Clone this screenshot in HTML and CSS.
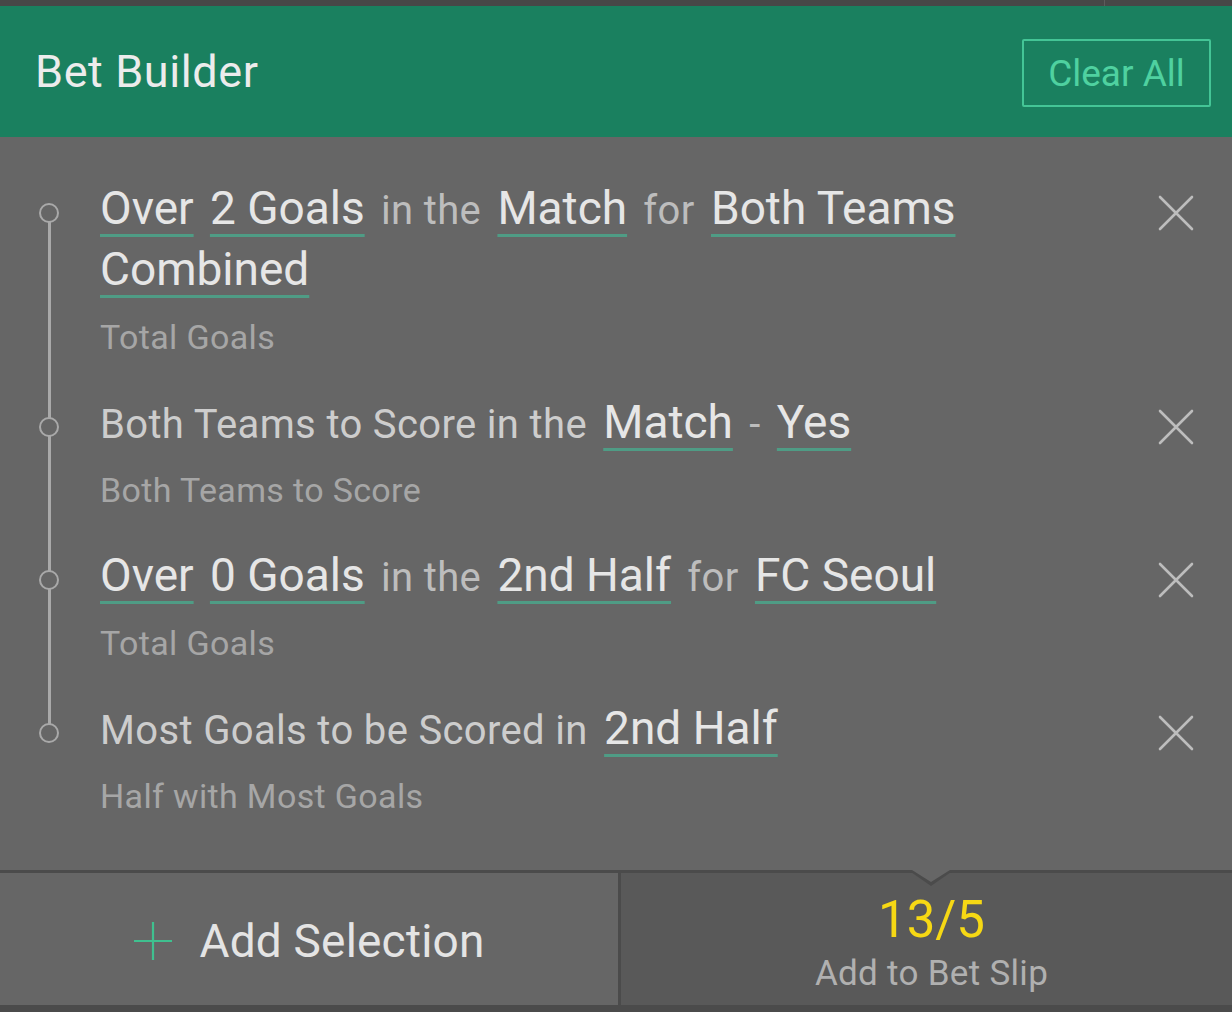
FILE: index.html
```html
<!DOCTYPE html>
<html lang="en">
<head>
    <meta charset="UTF-8">
    <meta name="viewport" content="width=device-width, initial-scale=1.0">
    <title>Bet Builder</title>
    <link rel="stylesheet" href="styles.css">
</head>
<body>
    <div class="topstrip"><span class="tick"></span></div>

    <header class="header">
        <h1>Bet Builder</h1>
        <button class="clear">Clear All</button>
    </header>

    <main class="list">
        <div class="item">
            <span class="dot"></span>
            <div class="body">
                <div class="line"><span class="hl">Over</span> <span class="hl">2 Goals</span> <span class="mid">in the</span> <span class="hl">Match</span> <span class="mid">for</span> <span class="hl">Both Teams</span> <span class="hl">Combined</span></div>
                <div class="sub">Total Goals</div>
            </div>
            <button class="remove"><svg viewBox="0 0 36 36" width="36" height="36"><path d="M2 2 L34 34 M34 2 L2 34"/></svg></button>
        </div>

        <div class="item">
            <span class="dot"></span>
            <div class="body">
                <div class="line"><span class="txt">Both Teams to Score in the</span> <span class="hl">Match</span> <span class="mid">-</span> <span class="hl">Yes</span></div>
                <div class="sub">Both Teams to Score</div>
            </div>
            <button class="remove"><svg viewBox="0 0 36 36" width="36" height="36"><path d="M2 2 L34 34 M34 2 L2 34"/></svg></button>
        </div>

        <div class="item">
            <span class="dot"></span>
            <div class="body">
                <div class="line"><span class="hl">Over</span> <span class="hl">0 Goals</span> <span class="mid">in the</span> <span class="hl">2nd Half</span> <span class="mid">for</span> <span class="hl">FC Seoul</span></div>
                <div class="sub">Total Goals</div>
            </div>
            <button class="remove"><svg viewBox="0 0 36 36" width="36" height="36"><path d="M2 2 L34 34 M34 2 L2 34"/></svg></button>
        </div>

        <div class="item">
            <span class="dot"></span>
            <div class="body">
                <div class="line"><span class="txt">Most Goals to be Scored in</span> <span class="hl">2nd Half</span></div>
                <div class="sub">Half with Most Goals</div>
            </div>
            <button class="remove"><svg viewBox="0 0 36 36" width="36" height="36"><path d="M2 2 L34 34 M34 2 L2 34"/></svg></button>
        </div>
    </main>

    <footer class="bar">
        <svg class="notch" viewBox="0 0 46 17" width="46" height="17">
            <polygon points="0,0 46,0 23,16" fill="#4b4b4b"/>
            <polygon points="4,0 42,0 23,12" fill="#666666"/>
        </svg>
        <div class="add">
            <svg class="plus" viewBox="0 0 40 40" width="40" height="40"><path d="M20 1 V39 M1 20 H39"/></svg>
            <span>Add Selection</span>
        </div>
        <div class="slip">
            <div class="odds">13/5</div>
            <div class="slip-label">Add to Bet Slip</div>
        </div>
    </footer>
</body>
</html>
```

FILE: styles.css
```css
body {
    margin: 0;
    width: 1232px;
    height: 1012px;
    overflow: hidden;
    background-color: #4b4b4b;
    font-family: Roboto, "Liberation Sans", sans-serif;
    display: flex;
    flex-direction: column;
}
.topstrip {
    height: 6px;
    background-color: #474747;
    position: relative;
}
.tick {
    position: absolute;
    left: 1104px;
    top: 0;
    width: 1px;
    height: 6px;
    background-color: #5c5c5c;
}
.header {
    height: 131px;
    background-color: #1a805f;
    display: flex;
    align-items: center;
    justify-content: space-between;
    padding: 0 21px 0 35px;
}
h1 {
    margin: 0;
    font-size: 45px;
    font-weight: 400;
    letter-spacing: 0.6px;
    color: #ececec;
}
.clear {
    width: 189px;
    height: 68px;
    margin-top: 3px;
    background: transparent;
    border: 2.5px solid #44c596;
    border-radius: 2px;
    color: #4fd1a0;
    font-family: inherit;
    font-size: 37px;
    padding: 0;
}
.list {
    height: 733px;
    background-color: #666666;
    box-sizing: border-box;
    padding-top: 42px;
}
.item {
    position: relative;
    display: flex;
    margin-bottom: 34px;
}
.item:not(:last-child)::after {
    content: "";
    position: absolute;
    left: 48px;
    width: 2.5px;
    top: 34px;
    bottom: -68px;
    background-color: #a9a9a9;
}
.dot {
    position: absolute;
    left: 38.5px;
    top: 23.5px;
    width: 16px;
    height: 16px;
    border: 2.5px solid #a9a9a9;
    border-radius: 50%;
    background-color: #666666;
    z-index: 1;
}
.body {
    margin-left: 97px;
    width: 1030px;
}
.line {
    font-size: 40px;
    line-height: 58px;
    letter-spacing: 0.35px;
    color: #bdbdbd;
}
.line span {
    margin: 0 3px;
}
.hl {
    font-size: 46px;
    letter-spacing: 0;
    color: #e6e6e6;
    text-decoration: underline;
    text-decoration-color: #4f9c85;
    text-decoration-thickness: 3px;
    text-underline-offset: 10px;
    text-decoration-skip-ink: none;
}
.txt {
    color: #cdcdcd;
}
.sub {
    margin-top: 14px;
    margin-left: 3px;
    font-size: 34px;
    line-height: 44px;
    letter-spacing: 0.35px;
    color: #a6a6a6;
}
.remove {
    position: absolute;
    right: 38px;
    top: 16px;
    width: 36px;
    height: 36px;
    padding: 0;
    border: none;
    background: transparent;
}
.remove svg path {
    stroke: #bdbdbd;
    stroke-width: 2.6;
    stroke-linecap: round;
    fill: none;
}
.bar {
    position: relative;
    height: 132px;
    border-top: 3px solid #4b4b4b;
    border-bottom: 7px solid #4b4b4b;
    display: flex;
}
.notch {
    position: absolute;
    left: 908px;
    top: -3px;
}
.add {
    width: 621px;
    background-color: #666666;
    border-right: 3px solid #4b4b4b;
    display: flex;
    align-items: center;
    justify-content: center;
    gap: 26px;
    padding-top: 4px;
    box-sizing: border-box;
    font-size: 46px;
    letter-spacing: 0.2px;
    color: #e4e4e4;
}
.plus path {
    stroke: #3fc08f;
    stroke-width: 2.2;
    fill: none;
}
.slip {
    flex: 1;
    background-color: #595959;
    display: flex;
    flex-direction: column;
    align-items: center;
    padding-top: 21px;
    padding-left: 10px;
}
.odds {
    font-size: 51px;
    line-height: 52px;
    color: #f6d814;
}
.slip-label {
    margin-top: 7px;
    font-size: 35px;
    line-height: 42px;
    letter-spacing: 0.3px;
    color: #b0b0b0;
}
```
